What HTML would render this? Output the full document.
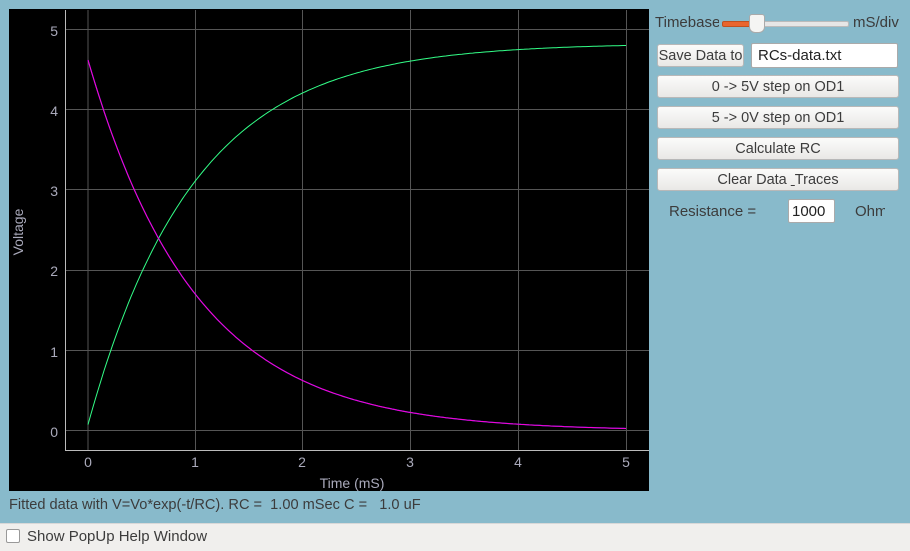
<!DOCTYPE html>
<html><head><style>
body{margin:0;width:910px;height:550px;background:#88bacb;font-family:"Liberation Sans","DejaVu Sans",sans-serif;position:relative;overflow:hidden;color:#333}
.a{position:absolute}
.btn{position:absolute;left:657px;width:242px;height:23px;border:1px solid #b8b8b8;border-radius:3px;background:linear-gradient(#fbfbfa,#e9e8e6);font-size:14.5px;text-align:center;line-height:23px;color:#3c3c3c;box-sizing:border-box}
.inp{position:absolute;background:#fff;border:1px solid #aaa;border-radius:2px;font-size:15px;box-sizing:border-box;color:#222}
</style></head><body>
<svg class="a" style="left:0;top:0" width="650" height="492">
<rect x="9" y="9" width="640" height="482" fill="#000"/>
<g stroke="#555" stroke-width="1">
<line x1="88" y1="10" x2="88" y2="450"/><line x1="195.5" y1="10" x2="195.5" y2="450"/><line x1="302.5" y1="10" x2="302.5" y2="450"/><line x1="410.5" y1="10" x2="410.5" y2="450"/><line x1="518.5" y1="10" x2="518.5" y2="450"/><line x1="626.5" y1="10" x2="626.5" y2="450"/>
<line x1="65" y1="29.5" x2="649" y2="29.5"/><line x1="65" y1="109.5" x2="649" y2="109.5"/><line x1="65" y1="189.5" x2="649" y2="189.5"/><line x1="65" y1="270.5" x2="649" y2="270.5"/><line x1="65" y1="350.5" x2="649" y2="350.5"/><line x1="65" y1="430.5" x2="649" y2="430.5"/>
</g>
<g stroke="#bbb"><line x1="65.5" y1="10" x2="65.5" y2="450"/><line x1="65" y1="450.5" x2="649" y2="450.5"/></g>
<g fill="#aab" font-size="14" font-family="Liberation Sans,sans-serif">
<text x="58" y="36" text-anchor="end">5</text><text x="58" y="116" text-anchor="end">4</text><text x="58" y="196" text-anchor="end">3</text><text x="58" y="276" text-anchor="end">2</text><text x="58" y="357" text-anchor="end">1</text><text x="58" y="437" text-anchor="end">0</text>
<text x="88" y="467" text-anchor="middle">0</text><text x="195" y="467" text-anchor="middle">1</text><text x="302" y="467" text-anchor="middle">2</text><text x="410" y="467" text-anchor="middle">3</text><text x="518" y="467" text-anchor="middle">4</text><text x="626" y="467" text-anchor="middle">5</text>
<text x="352" y="488" text-anchor="middle">Time (mS)</text>
<text transform="translate(23,232) rotate(-90)" text-anchor="middle">Voltage</text>
</g>
<path id="g" fill="none" stroke="#3f8" stroke-width="1"/>
<path id="b" fill="none" stroke="#33f" stroke-width="1.2"/>
<path id="m" fill="none" stroke="#f0c" stroke-width="1"/>
</svg>
<script>
var g="",m="";for(var i=0;i<=200;i++){var t=i*5/200,x=88+t*107.6;var vg=0.08+4.75*(1-Math.exp(-t/0.98));var vm=4.62*Math.exp(-t/1.0);g+=(i?"L":"M")+x.toFixed(1)+" "+(431-80.3*vg).toFixed(1);m+=(i?"L":"M")+x.toFixed(1)+" "+(431-80.3*vm).toFixed(1);}
document.getElementById("g").setAttribute("d",g);document.getElementById("b").setAttribute("d",m);document.getElementById("m").setAttribute("d",m);
</script>
<div class="a" style="left:9px;top:497px;font-size:14.6px;color:#3c3c3c">Fitted data with V=Vo*exp(-t/RC). RC =&nbsp; 1.00 mSec C =&nbsp;&nbsp; 1.0 uF</div>
<div class="a" style="left:0;top:523px;width:910px;height:27px;background:#f0efed;border-top:1px solid #d8d8d8"></div>
<div class="a" style="left:6px;top:529px;width:12px;height:12px;border:1px solid #999;border-radius:2px;background:#fff"></div>
<div class="a" style="left:27px;top:528px;font-size:15px;color:#3c3c3c">Show PopUp Help Window</div>
<div class="a" style="left:655px;top:14px;font-size:15px;color:#3c3c3c;width:64px;overflow:hidden;white-space:nowrap">Timebase</div>
<div class="a" style="left:722px;top:21px;width:125px;height:4px;background:#e6e6e6;border-radius:2px;border:1px solid #bbb"></div>
<div class="a" style="left:722px;top:21px;width:34px;height:4px;background:#e9652e;border-radius:2px;border:1px solid #c0501f"></div>
<div class="a" style="left:749px;top:14px;width:14px;height:17px;background:#f5f5f3;border:1px solid #aaa;border-radius:3px 3px 6px 6px"></div>
<div class="a" style="left:853px;top:14px;font-size:15px;color:#3c3c3c">mS/div</div>
<div class="btn" style="width:87px;top:44px;font-size:14.5px;white-space:nowrap;overflow:hidden">Save Data to</div>
<div class="inp" style="left:751px;top:43px;width:147px;height:25px;padding:3px 6px">RCs-data.txt</div>
<div class="btn" style="top:75px">0 -&gt; 5V step on OD1</div>
<div class="btn" style="top:106px">5 -&gt; 0V step on OD1</div>
<div class="btn" style="top:137px">Calculate RC</div>
<div class="btn" style="top:168px">Clear Data <u style="text-decoration-thickness:1px">&nbsp;</u>Traces</div>
<div class="a" style="left:669px;top:203px;font-size:15px;color:#3c3c3c">Resistance =</div>
<div class="inp" style="left:788px;top:199px;width:47px;height:24px;padding:3px 3px">1000</div>
<div class="a" style="left:855px;top:203px;font-size:15px;color:#3c3c3c;width:30px;overflow:hidden;white-space:nowrap">Ohm</div>
</body></html>
